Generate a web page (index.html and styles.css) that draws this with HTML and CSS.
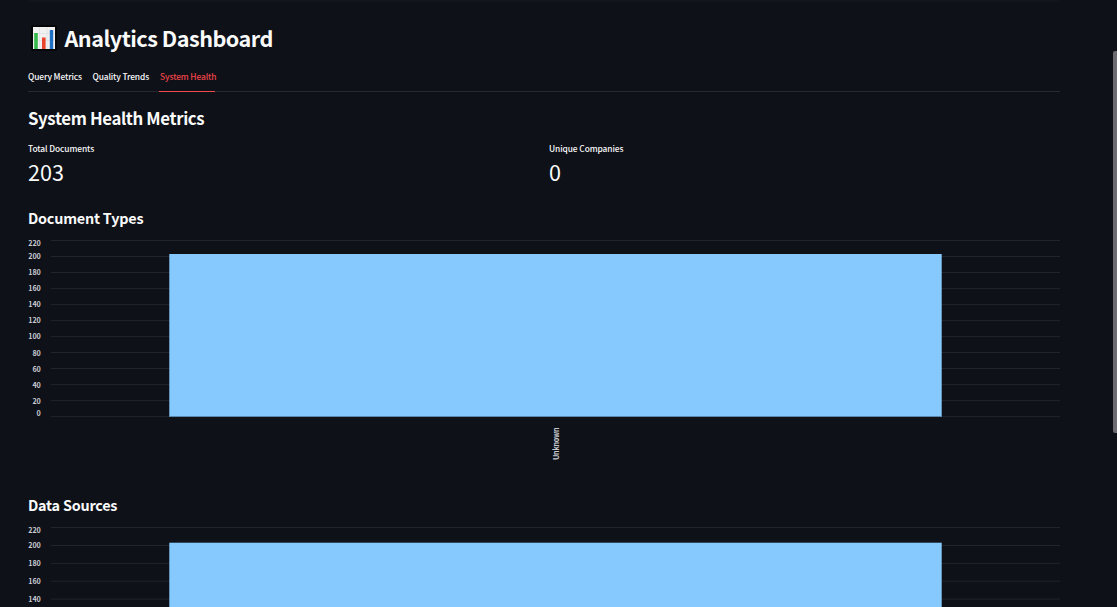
FILE: index.html
```
<!DOCTYPE html>
<html lang="en">
<head>
<meta charset="utf-8">
<title>Analytics Dashboard</title>
<link rel="stylesheet" href="styles.css">
</head>
<body>
<div class="previous-edge"></div>
<main class="content">
  <h1 class="title">
    <svg class="title-icon" width="26" height="26" viewBox="0 0 26 26">
      <rect width="26" height="26" rx="1.5" fill="#050608"/>
      <rect x="2" y="2" width="22" height="22" fill="#f1f1f2"/>
      <path d="M2 8.5H24M2 15.5H24M8.5 2V24M16 2V24" stroke="#dfe2e5" stroke-width=".8"/>
      <rect x="3.2" y="8" width="3.6" height="16" fill="#35b84b"/>
      <rect x="11" y="12.5" width="3.6" height="11.5" fill="#e8452c"/>
      <rect x="18.8" y="5" width="3.4" height="19" fill="#1d70c5"/>
    </svg>
    <span class="title-text">Analytics Dashboard</span>
  </h1>
  <nav class="tabs">
    <a class="tab">Query Metrics</a>
    <a class="tab">Quality Trends</a>
    <a class="tab active">System Health</a>
  </nav>
  <h2 class="section-title">System Health Metrics</h2>
  <section class="metrics">
    <div class="metric"><div class="metric-label">Total Documents</div><div class="metric-value">203</div></div>
    <div class="metric"><div class="metric-label">Unique Companies</div><div class="metric-value">0</div></div>
  </section>
  <h3 class="chart-title types-title">Document Types</h3>
  <svg class="chart" width="1032" height="250" viewBox="0 0 1032 250">
    <g class="grid">
      <path d="M23 8.5H1032M23 24.5H1032M23 40.5H1032M23 56.6H1032M23 72.6H1032M23 88.6H1032M23 104.6H1032M23 120.5H1032M23 136.5H1032M23 152.6H1032M23 168.6H1032M23 184.6H1032"/>
    </g>
    <rect class="bar" x="141.3" y="22" width="772.4" height="162.5"/>
    <path class="baseline" d="M141 184.5H914"/>
    <g class="ticks">
      <text x="12.7" y="14">220</text><text x="12.7" y="27">200</text><text x="12.7" y="43.2">180</text>
      <text x="12.7" y="59.2">160</text><text x="12.7" y="75.2">140</text><text x="12.7" y="91.3">120</text>
      <text x="12.7" y="107.3">100</text><text x="12.7" y="123.5">80</text><text x="12.7" y="139.5">60</text>
      <text x="12.7" y="155.5">40</text><text x="12.7" y="171.5">20</text><text x="12.7" y="184">0</text>
      <text transform="translate(531 195.5) rotate(-90)" textLength="32.5">Unknown</text>
    </g>
  </svg>
  <h3 class="chart-title sources-title">Data Sources</h3>
  <svg class="chart" width="1032" height="88" viewBox="0 0 1032 88">
    <g class="grid">
      <path d="M23 8.5H1032M23 26.5H1032M23 44.4H1032M23 62.2H1032M23 80.1H1032"/>
    </g>
    <rect class="bar" x="141.3" y="23.7" width="772.4" height="70"/>
    <g class="ticks">
      <text x="12.7" y="14">220</text><text x="12.7" y="29">200</text><text x="12.7" y="47">180</text>
      <text x="12.7" y="65">160</text><text x="12.7" y="83">140</text>
    </g>
  </svg>
</main>
<div class="scrollbar"></div>
</body>
</html>
```
FILE: styles.css
```
* { box-sizing: border-box; }
body {
  margin: 0;
  height: 607px;
  overflow: hidden;
  position: relative;
  background: #0e1118;
  color: #fafafa;
  font-family: "Noto Sans CJK SC", "Noto Sans", sans-serif;
}
h1, h2, h3 { margin: 0; font-weight: 700; white-space: nowrap; }
.previous-edge { height: 2px; margin: 0 57px 0 28px; background: #11151c; }
.content { width: 1032px; margin-left: 28px; }
.title { display: flex; align-items: center; height: 74px; padding-bottom: 2px; font-size: 21.6px; line-height: 30px; letter-spacing: -.5px; }
.title-icon { margin: 0 7px 0 3px; }
.title-text { margin-left: .5px; }
.tabs { display: flex; height: 16px; box-shadow: inset 0 -1px #262931; }
.tab { height: 16px; margin-right: 10.6px; font-size: 8.4px; font-weight: 500; line-height: 0; letter-spacing: -.12px; white-space: nowrap; }
.tab.active { width: 56px; margin-left: -.3px; color: #f04448; text-indent: .7px; box-shadow: inset 0 -1px #f2494b; }
.section-title { height: 51px; padding-top: 13px; font-size: 16.8px; line-height: 26px; letter-spacing: -.37px; }
.metrics { display: grid; grid-template-columns: 521px 1fr; height: 63px; }
.metric-label { font-size: 8.4px; font-weight: 500; line-height: 10px; letter-spacing: -.08px; }
.metric-value { font-size: 21.6px; line-height: 38px; }
.chart-title { font-size: 14.4px; line-height: 24px; height: 26px; letter-spacing: -.22px; }
.chart { display: block; overflow: visible; }
.sources-title { margin-top: 11px; }
.grid { stroke: #20242b; stroke-width: 1; fill: none; }
.bar { fill: #86c9ff; }
.baseline { stroke: #5c88ad; }
.ticks { fill: #c9cad0; font-size: 7.2px; font-weight: 700; text-anchor: end; }
.ticks text { letter-spacing: -.1px; }
.scrollbar { position: absolute; right: 0; top: 51px; width: 4px; height: 382px; background: #6b6b70; border-radius: 2px 0 0 2px; }
```
